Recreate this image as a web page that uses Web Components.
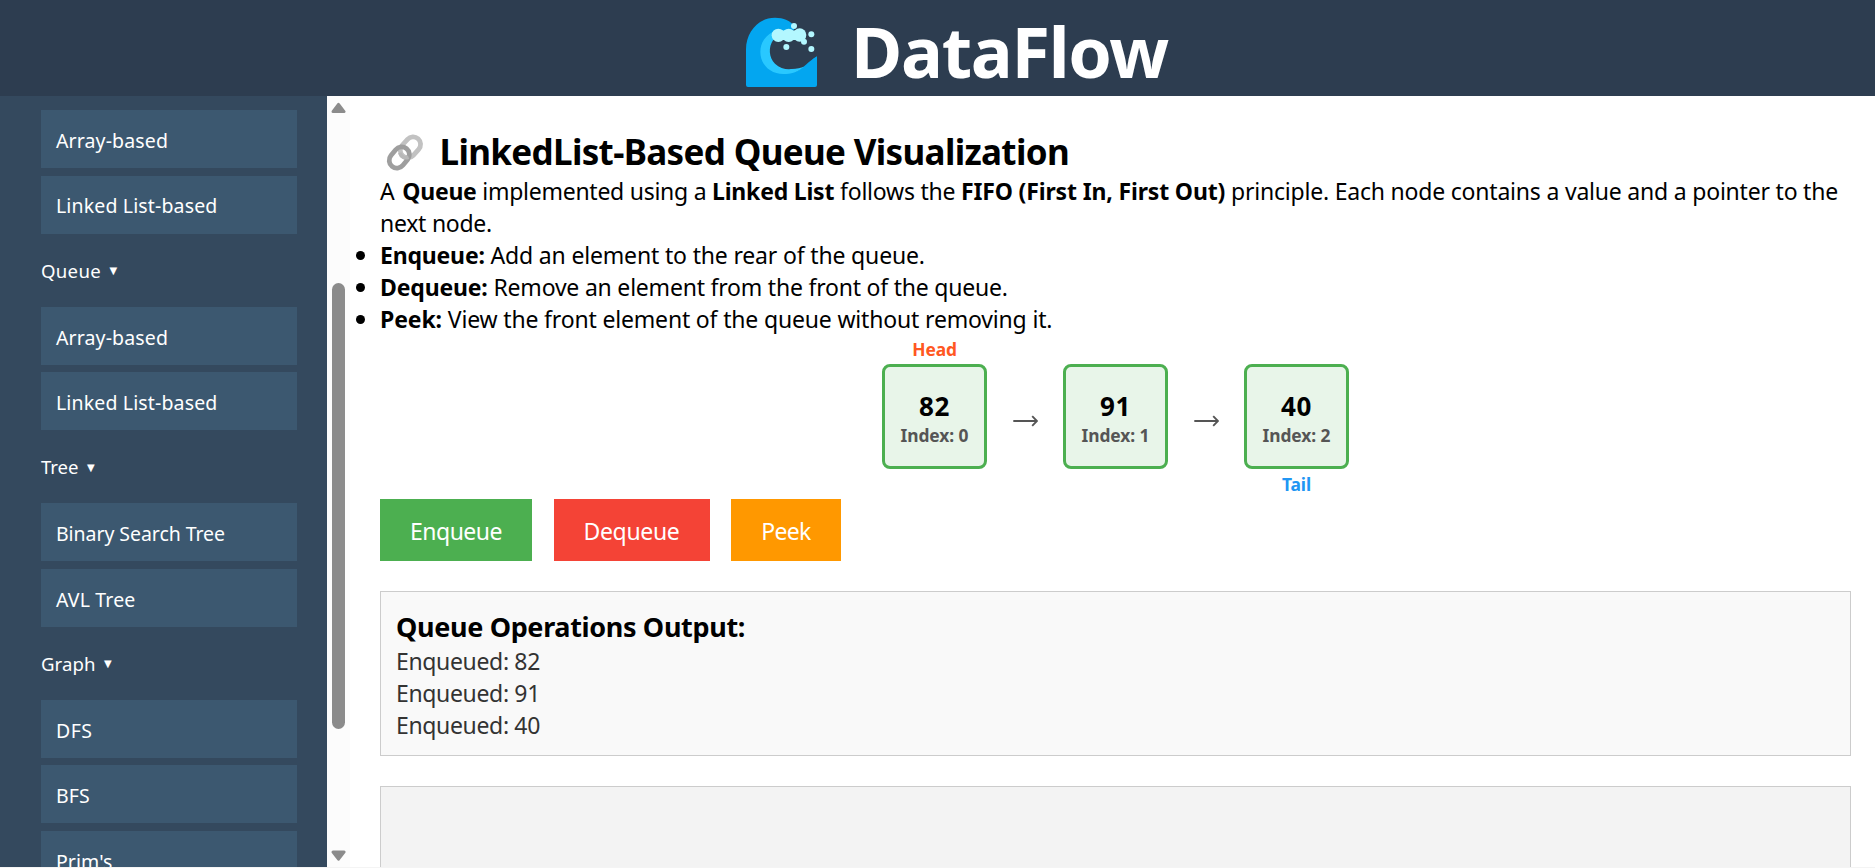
<!DOCTYPE html>
<html lang="en">
<head>
<meta charset="utf-8">
<title>DataFlow</title>
<style>
html, body { margin: 0; height: 100%; overflow: hidden; background: #fff; }
body { font-family: "Noto Sans", "Open Sans", sans-serif; color: #000; }
</style>
</head>
<body>
<data-flow-app></data-flow-app>
<script>
function define(name, html, setup) {
  const template = document.createElement('template');
  template.innerHTML = html.trim();
  customElements.define(name, class extends HTMLElement {
    connectedCallback() {
      if (this.shadowRoot) return;
      this.attachShadow({ mode: 'open' }).append(template.content.cloneNode(true));
      if (setup) setup(this, this.shadowRoot);
    }
  });
}

define('data-flow-app', `
<style>
:host { display: grid; grid-template-rows: 96px 1fr; height: calc(100vh - 1px); overflow: hidden; border-bottom: 1px solid #f4f4f4; }
.body { display: grid; grid-template-columns: 327px 23px 1fr; min-height: 0; }
</style>
<app-header></app-header>
<div class="body"><side-nav></side-nav><scroll-rail></scroll-rail><queue-page></queue-page></div>`);

define('app-header', `
<style>
:host { display: flex; align-items: flex-start; justify-content: center; gap: 27px; padding-left: 33px; box-sizing: border-box; background: #2d3d50; color: #fff; }
svg { display: block; margin-top: 12px; }
h1 { margin: 0; padding-top: 4.6px; font-size: 70px; line-height: 92.4px; font-weight: 700; }
</style>
<svg width="84" height="80" viewBox="0 0 252 240">
  <path fill="#03a6f0" d="M18 112C18 60 55 17 105 17C130 17 152 26 166 45L150 78L115 75L91 115L120 165L170 178C190 168 206 148 231 132V219Q231 225 225 225H24Q18 225 18 219Z"/>
  <path fill="#29c8ff" d="M99 59C76 71 61 92 61 120C61 158 92 186 130 186C152 186 174 180 192 164C172 173 120 175 108 152C88 130 85 105 105 80Z"/>
  <path fill="#2d3d50" d="M100 83C84 105 87 137 105 155C130 178 165 175 190 157C205 147 217 138 231 132V58L166 44L150 78Z"/>
  <g fill="#b3f7ff"><circle cx="162" cy="42" r="9"/><circle cx="115" cy="70" r="20"/><circle cx="146" cy="70" r="20"/><circle cx="179" cy="69" r="20"/><rect x="115" y="56" width="64" height="28"/><circle cx="192" cy="89" r="9"/><circle cx="214" cy="67" r="9"/><circle cx="139" cy="105" r="9"/><circle cx="214" cy="111" r="9"/></g>
</svg>
<h1><fit-text width="317">DataFlow</fit-text></h1>`);

define('side-nav', `
<style>
:host { display: block; overflow: hidden; background: #34495e; color: #fff; padding: 14.2px 30px 0 41px; }
</style>
<nav-item width="112">Array-based</nav-item>
<nav-item width="161.5">Linked List-based</nav-item>
<nav-group width="60">Queue</nav-group>
<nav-item width="112">Array-based</nav-item>
<nav-item width="161.5">Linked List-based</nav-item>
<nav-group width="37.5">Tree</nav-group>
<nav-item width="169">Binary Search Tree</nav-item>
<nav-item width="79.5">AVL Tree</nav-item>
<nav-group width="54.5">Graph</nav-group>
<nav-item width="36.5">DFS</nav-item>
<nav-item width="34">BFS</nav-item>
<nav-item width="56.5">Prim's</nav-item>`);

define('nav-item', `
<style>
:host { display: block; height: 58px; box-sizing: border-box; padding: 2.8px 0 0 15px; font-size: 19.5px; line-height: 55.2px; background: #3c5870; }
:host(:not(:last-child)) { margin-bottom: 7.4px; }
</style><fit-text><slot></slot></fit-text>`,
  (host, root) => root.querySelector('fit-text').setAttribute('width', host.getAttribute('width')));

define('nav-group', `
<style>
:host { display: block; height: 73.2px; margin-top: -7.4px; font-size: 18.6px; line-height: 74px; }
.caret { font: 10px/10px "DejaVu Sans", sans-serif; margin-left: 8.6px; vertical-align: 3.5px; }
</style><fit-text><slot></slot></fit-text><span class="caret">▼</span>`,
  (host, root) => root.querySelector('fit-text').setAttribute('width', host.getAttribute('width')));

define('scroll-rail', `
<style>
:host { display: flex; flex-direction: column; background: #fcfcfc; padding: 6px 0 5px 4px; box-sizing: border-box; }
svg { display: block; fill: #8b8b8b; stroke: #8b8b8b; stroke-width: 3; stroke-linejoin: round; flex: none; }
.track { flex: 1; padding: 169px 0 0 1px; }
.thumb { width: 13px; height: 446px; border-radius: 7px; background: #8b8b8b; }
</style>
<svg width="15" height="12" viewBox="0 0 15 12"><path d="M7.5 2.4L13 9.6H2Z"/></svg>
<div class="track"><div class="thumb"></div></div>
<svg width="15" height="12" viewBox="0 0 15 12"><path d="M7.5 9.2L13 2H2Z"/></svg>`);

define('queue-page', `
<style>
:host { display: block; min-width: 0; overflow: hidden; padding: 32px 24px 0 30px; font-size: 23px; line-height: 32px; }
h2 { display: flex; align-items: flex-start; margin: 0; font-size: 35px; line-height: 47px; height: 47px; }
h2 svg { display: block; flex: none; margin-right: 9.5px; }
p, ul { margin: 0; padding: 0; }
p { white-space: nowrap; }
li { white-space: nowrap; list-style: none; display: flex; align-items: center; }
li::before { content: ""; width: 9.4px; height: 9.4px; border-radius: 50%; background: #000; margin: 1px 15px 0 -24.4px; flex: none; }
.list { display: flex; justify-content: center; align-items: center; gap: 25.5px; padding: 29px 0 30px; }
.list svg { display: block; margin-top: 9px; }
.actions { display: flex; gap: 21.5px; }
.next { box-sizing: border-box; height: 120px; margin-top: 30px; background: #f3f3f3; border: 1px solid #ccc; }
</style>
<h2>
  <svg width="50" height="48" viewBox="0 0 50 48" fill="none" stroke-width="4.8">
    <rect x="-7.5" y="-11.5" width="15" height="23" rx="7.5" transform="translate(30.4 19.3) rotate(42)" stroke="#c2c2c2"/>
    <rect x="-7.7" y="-11.5" width="15.4" height="23" rx="7.7" transform="translate(19.3 29.5) rotate(39)" stroke="#9e9e9e"/>
    <path d="M19.8 24.8C21 29.2 24.5 30.6 28.6 29.2" stroke="#b8b8b8" stroke-width="3.6"/>
  </svg>
  <fit-text width="629.5">LinkedList-Based Queue Visualization</fit-text>
</h2>
<p><fit-text width="22.3">A </fit-text><b><fit-text width="80">Queue </fit-text></b><fit-text width="229.7">implemented using a </fit-text><b><fit-text width="128">Linked List </fit-text></b><fit-text width="121">follows the </fit-text><b><fit-text width="270">FIFO (First In, First Out) </fit-text></b><fit-text width="607">principle. Each node contains a value and a pointer to the</fit-text></p>
<p><fit-text width="112">next node.</fit-text></p>
<ul>
  <li><b><fit-text width="110.5">Enqueue: </fit-text></b><fit-text width="434.3">Add an element to the rear of the queue.</fit-text></li>
  <li><b><fit-text width="113.5">Dequeue: </fit-text></b><fit-text width="514.3">Remove an element from the front of the queue.</fit-text></li>
  <li><b><fit-text width="67.8">Peek: </fit-text></b><fit-text width="604.5">View the front element of the queue without removing it.</fit-text></li>
</ul>
<div class="list">
  <list-node value="82" index="0" mark="Head"></list-node>
  <svg width="25" height="12" viewBox="0 0 25 12" fill="none" stroke="#555" stroke-width="1.9"><path d="M.3 6H23.6M19.2 1.2L24 6L19.2 10.8"/></svg>
  <list-node value="91" index="1"></list-node>
  <svg width="25" height="12" viewBox="0 0 25 12" fill="none" stroke="#555" stroke-width="1.9"><path d="M.3 6H23.6M19.2 1.2L24 6L19.2 10.8"/></svg>
  <list-node value="40" index="2" mark="Tail"></list-node>
</div>
<div class="actions">
  <action-button style="--w:152px;--bg:#4caf50"><fit-text width="92">Enqueue</fit-text></action-button>
  <action-button style="--w:156px;--bg:#f44336"><fit-text width="96">Dequeue</fit-text></action-button>
  <action-button style="--w:110px;--bg:#ff9800"><fit-text width="49.5">Peek</fit-text></action-button>
</div>
<output-panel>
  <fit-text slot="title" width="349">Queue Operations Output:</fit-text>
  <div><fit-text width="144">Enqueued: 82</fit-text></div>
  <div><fit-text width="144">Enqueued: 91</fit-text></div>
  <div><fit-text width="144">Enqueued: 40</fit-text></div>
</output-panel>
<div class="next"></div>`);

define('list-node', `
<style>
:host { display: block; position: relative; box-sizing: border-box; width: 105px; height: 105px; padding-top: 23px; border: 3px solid #4caf50; border-radius: 8px; background: #e8f5e9; text-align: center; font-weight: 700; }
.value { font-size: 26px; line-height: 32px; margin-bottom: 1px; }
.index { font-size: 17.4px; line-height: 24px; color: #555; white-space: nowrap; }
.mark { position: absolute; left: 0; right: 0; font-size: 17.4px; line-height: 24px; }
.Head { top: -30px; color: #ff5722; }
.Tail { top: 105px; color: #2196f3; }
</style>
<div class="value"></div><div class="index"></div>`,
  (host, root) => {
    const fit = (w, t) => `<fit-text width="${w}">${t}</fit-text>`;
    root.querySelector('.value').innerHTML = fit(31, host.getAttribute('value'));
    root.querySelector('.index').innerHTML = fit(68, 'Index: ' + host.getAttribute('index'));
    const mark = host.getAttribute('mark');
    if (mark) {
      const label = document.createElement('div');
      label.className = 'mark ' + mark;
      label.innerHTML = fit(mark === 'Head' ? 44.5 : 29, mark);
      root.append(label);
    }
  });

define('action-button', `
<style>
:host { display: block; }
button { display: block; width: var(--w); height: 62px; padding: 2px 0 0; border: 0; background: var(--bg); color: #fff; font: inherit; line-height: 60px; text-align: center; }
</style><button><slot></slot></button>`);

define('output-panel', `
<style>
:host { display: block; box-sizing: border-box; margin-top: 30px; padding: 15px 15px 14px; border: 1px solid #ccc; background: #f9f9f9; color: #333; }
h3 { margin: 0; padding-top: 1px; font-size: 27px; line-height: 37px; color: #000; }
</style><h3><slot name="title"></slot></h3><slot></slot>`);

// Inline run of text whose tracking is adjusted so that it occupies a given advance width.
define('fit-text', `
<style>:host { display: inline-block; white-space: pre; text-align: left; }</style><slot></slot>`,
  (host) => {
    const chars = host.getRootNode().host && !host.textContent.trim()
      ? host.getRootNode().host.textContent.length : host.textContent.length;
    const extra = host.getAttribute('width') - host.getBoundingClientRect().width;
    host.style.letterSpacing = (extra / chars).toFixed(4) + 'px';
  });
</script>
</body>
</html>
